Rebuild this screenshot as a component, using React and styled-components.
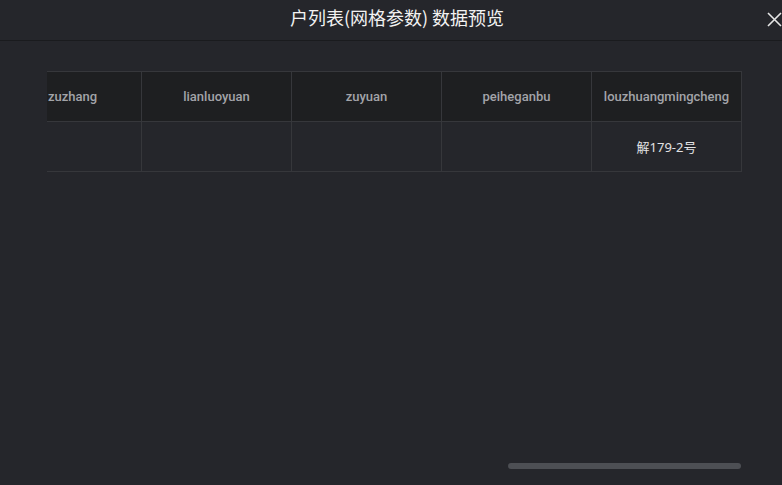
import React from "react"
import styled, { createGlobalStyle } from "styled-components"

const GlobalStyle = createGlobalStyle`
  html, body {
    margin: 0;
    padding: 0;
    background: #25262b;
    font-family: "Noto Sans", "Noto Sans CJK SC", sans-serif;
  }
`

const columns = [
  { key: "zuzhang", title: "zuzhang" },
  { key: "lianluoyuan", title: "lianluoyuan" },
  { key: "zuyuan", title: "zuyuan" },
  { key: "peiheganbu", title: "peiheganbu" },
  { key: "louzhuangmingcheng", title: "louzhuangmingcheng" },
]

const rows = [
  { zuzhang: "", lianluoyuan: "", zuyuan: "", peiheganbu: "", louzhuangmingcheng: "解179-2号" },
]

const Modal = styled.div`
  width: 782px;
  height: 485px;
  background: #25262b;
  display: flex;
  flex-direction: column;
  overflow: hidden;
`

const Header = styled.div`
  height: 40px;
  flex-shrink: 0;
  display: flex;
  align-items: center;
  justify-content: center;
  position: relative;
  padding-left: 12px;
  border-bottom: 1px solid #1a1b1e;
`

const Title = styled.h2`
  margin: 0;
  font-size: 18px;
  font-weight: 400;
  color: #f2f2f2;
  font-family: "Noto Sans CJK SC", "Noto Sans", sans-serif;
  transform: translateY(-3px);
`

const CloseButton = styled.button`
  position: absolute;
  right: 0;
  top: 9px;
  width: 22px;
  height: 20px;
  padding: 0;
  border: 0;
  background: transparent;
  cursor: pointer;
  display: flex;
  align-items: center;
  justify-content: flex-end;
`

const Body = styled.div`
  flex: 1;
  display: flex;
  flex-direction: column;
  padding: 30px 40px 16px 47px;
`

const TableViewport = styled.div`
  flex: 1;
  overflow: hidden;
`

const Table = styled.div`
  margin-left: -44px;
  display: grid;
  grid-template-columns: 138px repeat(${(p) => p.$cols - 1}, 150px);
  width: max-content;
  border-top: 1px solid #36373b;
  border-left: 1px solid #36373b;
`

const Cell = styled.div`
  height: 49px;
  display: flex;
  align-items: center;
  justify-content: center;
  border-right: 1px solid #36373b;
  border-bottom: 1px solid #36373b;
  background: ${(p) => (p.$head ? "#1e1f21" : "#25262b")};
  color: ${(p) => (p.$head ? "#a3a4a9" : "#e2e2e4")};
  font-size: 13px;
  font-weight: ${(p) => (p.$head ? 500 : 400)};
  font-family: ${(p) => (p.$head ? "Roboto, sans-serif" : "\"Noto Sans\", \"Noto Sans CJK SC\", sans-serif")};
  white-space: nowrap;
`

const ScrollTrack = styled.div`
  height: 6px;
  padding-right: 1px;
  display: flex;
  justify-content: flex-end;
`

const ScrollThumb = styled.div`
  width: 233px;
  height: 6px;
  border-radius: 3px;
  background: #4d4f54;
`

export default function App() {
  return (
    <>
      <GlobalStyle />
      <Modal>
        <Header>
          <Title>户列表(网格参数) 数据预览</Title>
          <CloseButton aria-label="close">
            <svg width="16" height="16" viewBox="0 0 16 16">
              <path d="M2 2 L15 15 M15 2 L2 15" stroke="#e6e6e6" strokeWidth="1.6" fill="none" />
            </svg>
          </CloseButton>
        </Header>
        <Body>
          <TableViewport>
            <Table $cols={columns.length}>
              {columns.map((c) => (
                <Cell key={c.key} $head>{c.title}</Cell>
              ))}
              {rows.map((r, i) =>
                columns.map((c) => <Cell key={`${i}-${c.key}`}>{r[c.key]}</Cell>)
              )}
            </Table>
          </TableViewport>
          <ScrollTrack>
            <ScrollThumb />
          </ScrollTrack>
        </Body>
      </Modal>
    </>
  )
}
